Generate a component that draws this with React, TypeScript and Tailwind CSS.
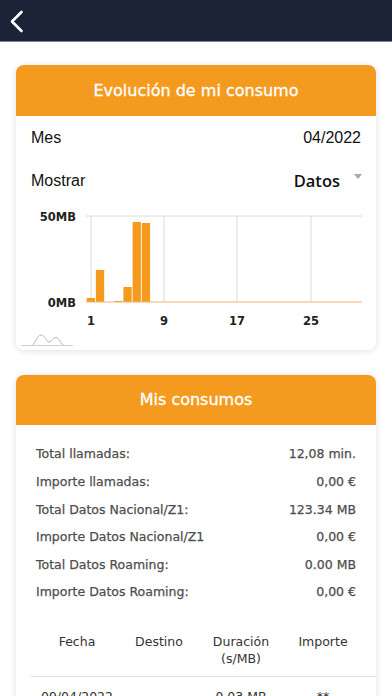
import React from "react";

const bars: number[] = [4, 32, 0, 1, 15, 80, 79];

function Chart() {
  const x0 = 70.7;
  const step = 9.18;
  const base = 100;
  const ticks: [number, string][] = [
    [75, "1"],
    [148, "9"],
    [221, "17"],
    [295, "25"],
  ];
  return (
    <svg width="360" height="128" viewBox="0 0 360 128" className="block font-bold fill-[#222] text-[11.5px]">
      <line x1="70" y1="14" x2="346" y2="14" stroke="#dcdcdc" strokeWidth="1" />
      {ticks.map(([x]) => (
        <line key={x} x1={x} y1="14" x2={x} y2={base} stroke="#dcdcdc" strokeWidth="1" />
      ))}
      {Array.from({ length: 30 }).map((_, i) => {
        const h = bars[i] ?? 0;
        const x = x0 + i * step;
        return h > 0 ? <rect key={i} x={x} y={base - h} width="8.3" height={h} fill="#f49b1f" /> : null;
      })}
      <line x1="70" y1={base} x2="346" y2={base} stroke="#f2b56b" strokeWidth="1" />
      <text x="60" y="18.5" textAnchor="end">
        50MB
      </text>
      <text x="60" y="104.5" textAnchor="end">
        0MB
      </text>
      {ticks.map(([x, t]) => (
        <text key={t} x={x} y="123" textAnchor="middle">
          {t}
        </text>
      ))}
    </svg>
  );
}

const rows: [string, string][] = [
  ["Total llamadas:", "12,08 min."],
  ["Importe llamadas:", "0,00 €"],
  ["Total Datos Nacional/Z1:", "123.34 MB"],
  ["Importe Datos Nacional/Z1", "0,00 €"],
  ["Total Datos Roaming:", "0.00 MB"],
  ["Importe Datos Roaming:", "0,00 €"],
];

export default function App() {
  return (
    <div className="w-[392px] h-[696px] overflow-hidden bg-white font-['DejaVu_Sans','Noto_Sans',sans-serif]">
      <div className="h-[42px] bg-[#1c2336] border-b border-[#7e838d] flex items-center">
        <svg width="30" height="40" viewBox="0 0 30 40" className="ml-[2px]">
          <path d="M19.5 11 L10 20.5 L19.5 30" fill="none" stroke="#fff" strokeWidth="2.6" strokeLinecap="round" strokeLinejoin="round" />
        </svg>
      </div>

      <div className="mx-[16px] mt-[23px] rounded-[8px] bg-white shadow-[0_1px_6px_rgba(0,0,0,0.12)]">
        <div className="h-[51px] rounded-t-[8px] bg-[#f49b1f] flex items-center justify-center text-white text-[16px] [-webkit-text-stroke:0.3px_white]">
          Evolución de mi consumo
        </div>
        <div className="h-[44px] px-[15px] flex items-center justify-between text-[16px] text-[#111] font-['Liberation_Sans',Arial,sans-serif]">
          <span>Mes</span>
          <span>04/2022</span>
        </div>
        <div className="h-[42px] pl-[15px] pr-[14px] flex items-center justify-between">
          <span className="text-[16px] text-[#111] font-['Liberation_Sans',Arial,sans-serif]">Mostrar</span>
          <div className="flex items-center">
            <span className="text-[16.5px] font-semibold text-[#111] font-['Open_Sans',sans-serif]">Datos</span>
            <svg width="8" height="6" viewBox="0 0 8 6" className="ml-[14px] -mt-[8px]">
              <path d="M0 0 L8 0 L4 5 Z" fill="#a8a8a8" />
            </svg>
          </div>
        </div>
        <Chart />
        <div className="h-[20px] pl-[5px] pt-[3px]">
          <svg width="52" height="14" viewBox="0 0 52 14" className="block">
            <path
              d="M0 12.5 L10 12.5 C14 12.5 16 2 20 2 C24 2 25 9 28 9 C31 9 32 4.5 35 4.5 C38 4.5 40 12.5 44 12.5"
              fill="none"
              stroke="#b8b8b8"
              strokeWidth="1"
            />
            <line x1="0" y1="12.5" x2="52" y2="12.5" stroke="#cfcfcf" strokeWidth="1" />
          </svg>
        </div>
      </div>

      <div className="mx-[16px] mt-[25px] h-[400px] rounded-t-[8px] bg-white shadow-[0_1px_6px_rgba(0,0,0,0.12)]">
        <div className="h-[50px] rounded-t-[8px] bg-[#f49b1f] flex items-center justify-center text-white text-[16px] [-webkit-text-stroke:0.3px_white]">
          Mis consumos
        </div>
        <div className="pt-[16px] px-[20px]">
          {rows.map(([l, r]) => (
            <div key={l} className="h-[27.6px] flex items-center justify-between text-[12.5px] text-[#4e4e4e] [-webkit-text-stroke:0.25px_#4e4e4e]">
              <span>{l}</span>
              <span>{r}</span>
            </div>
          ))}
        </div>
        <div className="mt-[26px] ml-[20px] grid grid-cols-[82px_82px_82px_82px] text-center text-[12.5px] leading-[17px] text-[#333]">
          <div>Fecha</div>
          <div>Destino</div>
          <div>
            Duración
            <br />
            (s/MB)
          </div>
          <div>Importe</div>
        </div>
        <div className="mt-[9px] ml-[15px] h-px bg-[#dedede]" />
        <div className="mt-[11px] ml-[20px] grid grid-cols-[82px_82px_82px_82px] text-center text-[12.5px] leading-[17px] text-[#333]">
          <div>09/04/2022</div>
          <div>-</div>
          <div>0.03 MB</div>
          <div>**</div>
        </div>
      </div>
    </div>
  );
}
